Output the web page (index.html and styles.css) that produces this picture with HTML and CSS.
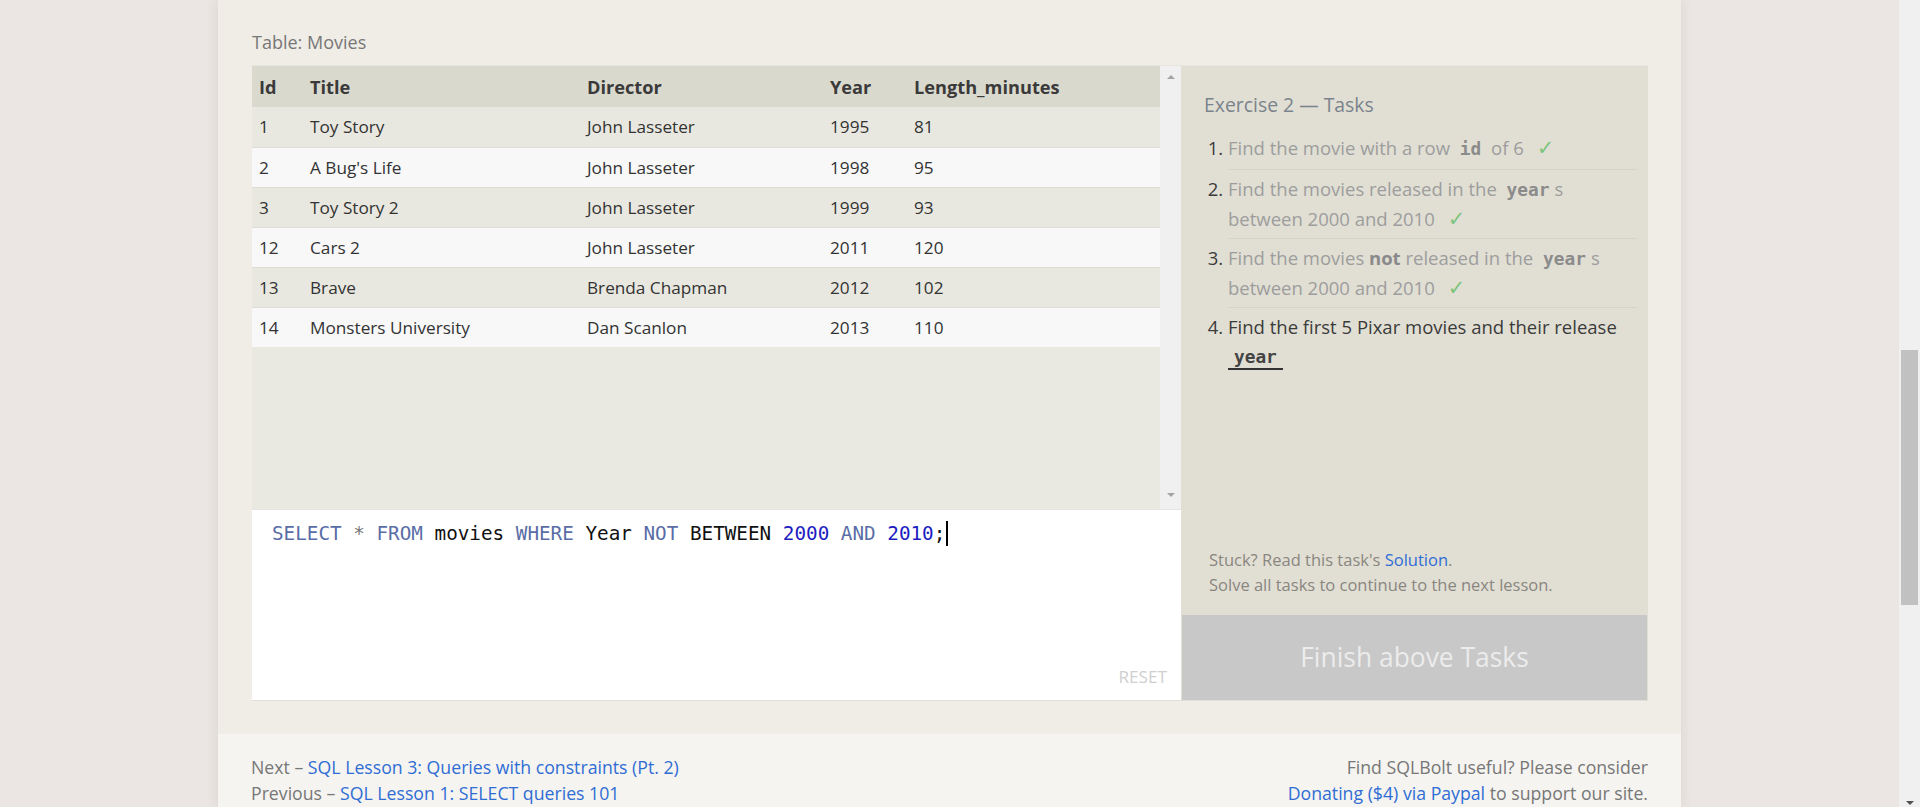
FILE: index.html
```html
<!DOCTYPE html>
<html>
<head>
<meta charset="utf-8">
<title>SQL Lesson 2</title>
<link rel="stylesheet" href="styles.css">
</head>
<body>
<div class="page">
  <div class="viewport">
    <div class="container">
      <section class="lesson">
        <div class="table-label">Table: Movies</div>
        <div class="exercise">
          <div class="workspace">
            <div class="results">
              <div class="results-scroll">
                <table class="movies">
                  <thead>
                    <tr><th class="c-id">Id</th><th class="c-title">Title</th><th class="c-dir">Director</th><th class="c-year">Year</th><th>Length_minutes</th></tr>
                  </thead>
                  <tbody>
                    <tr><td>1</td><td>Toy Story</td><td>John Lasseter</td><td>1995</td><td>81</td></tr>
                    <tr><td>2</td><td>A Bug's Life</td><td>John Lasseter</td><td>1998</td><td>95</td></tr>
                    <tr><td>3</td><td>Toy Story 2</td><td>John Lasseter</td><td>1999</td><td>93</td></tr>
                    <tr><td>12</td><td>Cars 2</td><td>John Lasseter</td><td>2011</td><td>120</td></tr>
                    <tr><td>13</td><td>Brave</td><td>Brenda Chapman</td><td>2012</td><td>102</td></tr>
                    <tr><td>14</td><td>Monsters University</td><td>Dan Scanlon</td><td>2013</td><td>110</td></tr>
                  </tbody>
                </table>
              </div>
              <div class="vscroll">
                <span class="arrow arrow-up"></span>
                <span class="arrow arrow-down"></span>
              </div>
            </div>
            <div class="editor">
              <div class="code"><span class="kw">SELECT</span> <span class="op">*</span> <span class="kw">FROM</span> movies <span class="kw">WHERE</span> Year <span class="kw">NOT</span> BETWEEN <span class="num">2000</span> <span class="kw">AND</span> <span class="num">2010</span>;<span class="cursor"></span></div>
              <div class="reset">RESET</div>
            </div>
          </div>
          <div class="tasks">
            <h3 class="tasks-title">Exercise 2 — Tasks</h3>
            <ol class="task-list">
              <li class="done first"><span class="txt">Find the movie with a row <code>id</code> of 6</span><span class="check">✓</span></li>
              <li class="done"><span class="txt">Find the movies released in the <code>year</code>s<br>between 2000 and 2010</span><span class="check">✓</span></li>
              <li class="done"><span class="txt">Find the movies <b>not</b> released in the <code>year</code>s<br>between 2000 and 2010</span><span class="check">✓</span></li>
              <li class="current"><span class="txt">Find the first 5 Pixar movies and their release<br><code class="active">year</code></span></li>
            </ol>
            <div class="help">
              <div>Stuck? Read this task's <a class="link" href="#">Solution</a>.</div>
              <div>Solve all tasks to continue to the next lesson.</div>
            </div>
            <div class="finish">Finish above Tasks</div>
          </div>
        </div>
      </section>
      <footer class="footer">
        <div class="nav">
          <div>Next – <a class="link" href="#">SQL Lesson 3: Queries with constraints (Pt. 2)</a></div>
          <div>Previous – <a class="link" href="#">SQL Lesson 1: SELECT queries 101</a></div>
        </div>
        <div class="donate">
          <div>Find SQLBolt useful? Please consider</div>
          <div><a class="link" href="#">Donating ($4) via Paypal</a> to support our site.</div>
        </div>
      </footer>
    </div>
  </div>
  <div class="scrollbar"><div class="thumb"></div><span class="sb-arrow"></span></div>
</div>
</body>
</html>
```

FILE: styles.css
```css
* { box-sizing: border-box; }
html, body { margin: 0; padding: 0; }
body {
  background: #ebe6e3;
  font-family: "Open Sans", "Noto Sans", sans-serif;
  color: #444;
  height: 807px;
  overflow: hidden;
}
.page { display: flex; height: 807px; }
.viewport { flex: 1; display: flex; justify-content: center; overflow: hidden; }
.container {
  width: 1463px;
  background: #f0ede6;
  box-shadow: 0 0 12px rgba(90, 70, 60, 0.12);
  display: flex;
  flex-direction: column;
}
.lesson { padding: 30px 33px 33px 34px; }
.table-label { font-size: 18px; line-height: 24px; color: #777; margin-bottom: 11px; }
.exercise {
  display: flex;
  border-top: 1px solid #e7e5dd;
  border-bottom: 1px solid #e2e0d8;
  height: 636px;
}
.workspace { width: 929px; display: flex; flex-direction: column; }
.results { height: 443px; display: flex; background: #e9e8e1; }
.results-scroll { flex: 1; }
.movies { border-collapse: collapse; width: 908px; font-size: 17.2px; color: #333; }
.movies th, .movies td { text-align: left; padding: 0 7px; white-space: nowrap; }
.movies th { background: #dad9ce; height: 41px; font-weight: 700; color: #3a3a3a; font-size: 18.2px; }
.movies td { height: 40px; border-bottom: 1px solid #dedcd5; }
.movies tbody tr:nth-child(odd) td { background: #e9e8e0; }
.movies tbody tr:nth-child(even) td { background: #f8f8f8; }
.movies tbody tr:last-child td { border-bottom: none; }
.c-id { width: 51px; }
.c-title { width: 277px; }
.c-dir { width: 243px; }
.c-year { width: 84px; }
.vscroll {
  width: 21px;
  background: #f0f0f0;
  display: flex;
  flex-direction: column;
  justify-content: space-between;
  align-items: center;
  padding: 9px 0 12px;
}
.arrow { width: 0; height: 0; border-left: 4px solid transparent; border-right: 4px solid transparent; }
.arrow-up { border-bottom: 4px solid #a3a3a3; }
.arrow-down { border-top: 4px solid #a3a3a3; }
.editor {
  flex: 1;
  background: #fff;
  border-top: 1px solid #e4e4e4;
  display: flex;
  flex-direction: column;
}
.code {
  flex: 1;
  padding: 11px 20px;
  font-family: "DejaVu Sans Mono", "Liberation Mono", monospace;
  font-size: 19.3px;
  line-height: 24px;
  color: #111;
  white-space: pre;
}
.kw { color: #5a6da6; }
.op { color: #777; }
.num { color: #1d1dc2; }
.cursor { display: inline-block; width: 2px; height: 25px; background: #000; vertical-align: -6px; margin-left: 1px; }
.reset { align-self: flex-end; padding: 0 14px 12px 0; font-size: 17.2px; line-height: 22px; color: #cfcfcf; }
.tasks {
  width: 467px;
  background: #e1dfd4;
  display: flex;
  flex-direction: column;
  padding: 26px 11px 0 23px;
}
.tasks-title { margin: 0; font-size: 19.4px; font-weight: 400; line-height: 26px; color: #7b838c; }
.task-list { margin: 9px 0 0; padding: 0 0 0 24px; flex: 1; font-size: 18.5px; }
.task-list li { line-height: 29.4px; padding: 4.5px 0; border-bottom: 1px solid #d6d4c9; color: #3b3b3b; }
.task-list li.first { padding: 5.5px 0 7px; }
.task-list li:last-child { border-bottom: none; }
.task-list li::marker { color: #3b3b3b; }
.task-list li.done .txt { color: #9d9d9d; }
.task-list code {
  font-family: "DejaVu Sans Mono", "Liberation Mono", monospace;
  font-weight: 700;
  font-size: 17.8px;
  line-height: 1;
  padding: 0 5px;
  color: #8b8b8b;
}
.task-list li.done b { color: #8a8a8a; }
.task-list code.active { color: #444; border-bottom: 2px solid #333; padding: 0 6px 1px; }
.check { color: #7dc57d; margin-left: 13px; font-family: "DejaVu Sans", sans-serif; font-size: 21px; line-height: 1; }
.help { padding-left: 5px; margin-bottom: 18px; font-size: 16.5px; line-height: 25px; color: #8a8680; }
.link { color: #2f6dd5; text-decoration: none; }
.finish {
  margin: 0 -10px 0 -22px;
  height: 85px;
  background: #c8c8c8;
  color: #ececec;
  font-size: 26.4px;
  line-height: 85px;
  text-align: center;
}
.footer {
  flex: 1;
  background: #f5f4f0;
  display: flex;
  justify-content: space-between;
  padding: 20px 33px 0 33px;
  font-size: 17.7px;
  line-height: 26px;
  color: #777;
}
.donate { text-align: right; }
.scrollbar { width: 21px; background: #f0f0f0; padding: 350px 2px 0 2px; position: relative; }
.thumb { height: 255px; background: #c1c1c1; }
.sb-arrow { position: absolute; left: 7px; bottom: 2px; width: 0; height: 0; border-left: 4px solid transparent; border-right: 4px solid transparent; border-top: 4px solid #505050; }
```
